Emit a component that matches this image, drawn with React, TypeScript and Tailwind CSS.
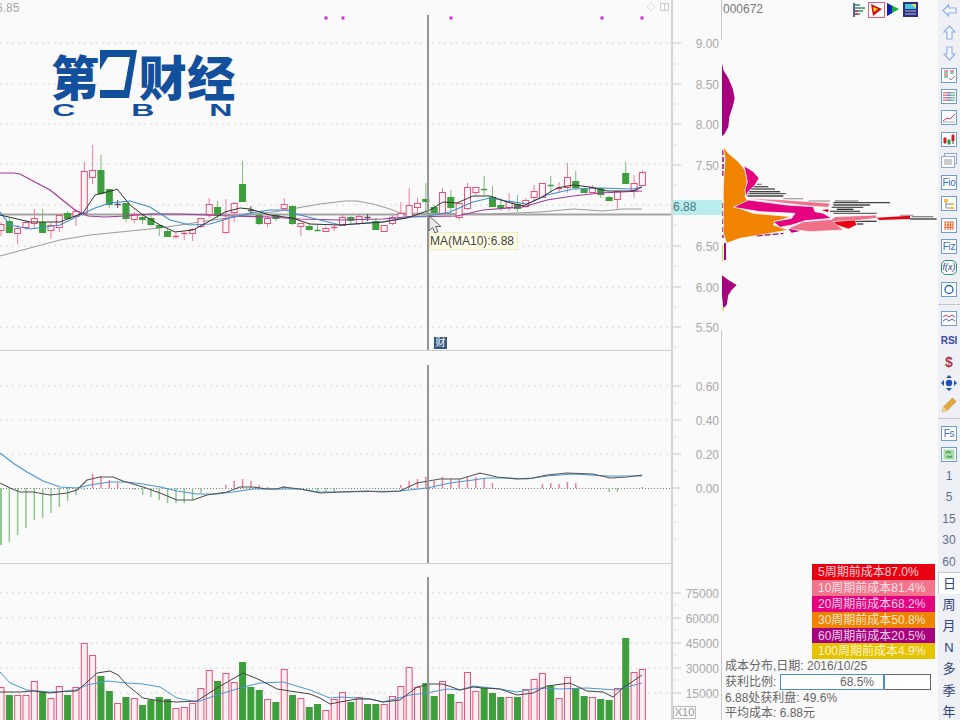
import React from "react";

type Candle = [number, number, number, number, "r" | "g" | "k"];
type Pt = [number, number];

const RED = "#e8517a";
const GREEN = "#3c9f3c";

// x of bar i, same grid in all three panels
const bx = (i: number) => 1 + 8.33 * i;

const candles: Candle[] = [
  [222, 224, 230, 236, "r"], [218, 221, 232, 233, "g"], [225, 228, 233, 244, "r"], [220, 222, 227, 230, "r"],
  [209, 218, 223, 228, "r"], [209, 222, 232, 233, "g"], [223, 225, 230, 239, "r"], [215, 215, 227, 232, "r"],
  [211, 213, 218, 219, "g"], [209, 211, 216, 226, "r"], [162, 171, 213, 213, "r"], [145, 170, 177, 184, "r"],
  [155, 170, 193, 195, "g"], [189, 189, 204, 208, "g"], [200, 204, 205, 208, "k"], [203, 203, 218, 222, "g"],
  [212, 214, 219, 223, "r"], [214, 217, 219, 224, "g"], [213, 218, 224, 226, "g"], [225, 225, 227, 236, "g"],
  [229, 231, 236, 236, "g"], [233, 236, 237, 238, "r"], [232, 233, 234, 240, "r"], [228, 229, 233, 241, "r"],
  [218, 218, 226, 228, "r"], [198, 204, 214, 218, "r"], [201, 207, 214, 218, "g"], [199, 218, 232, 234, "r"],
  [202, 203, 212, 222, "r"], [161, 184, 201, 201, "g"], [206, 210, 211, 214, "k"], [211, 215, 223, 225, "g"],
  [214, 218, 223, 227, "r"], [213, 215, 218, 221, "g"], [198, 204, 208, 211, "r"], [205, 206, 223, 225, "g"],
  [223, 223, 226, 236, "r"], [224, 226, 229, 231, "g"], [224, 230, 231, 231, "g"], [226, 228, 231, 231, "r"],
  [225, 227, 228, 231, "r"], [215, 217, 225, 226, "r"], [216, 217, 220, 224, "g"], [214, 216, 223, 225, "r"],
  [214, 217, 218, 221, "k"], [218, 221, 229, 229, "g"], [225, 225, 231, 231, "r"], [215, 217, 223, 225, "r"],
  [202, 213, 218, 218, "r"], [188, 205, 216, 216, "r"], [198, 203, 207, 216, "r"], [183, 199, 201, 216, "g"],
  [205, 207, 212, 212, "g"], [188, 192, 213, 215, "r"], [190, 197, 207, 213, "g"], [203, 203, 217, 220, "r"],
  [183, 187, 208, 210, "r"], [187, 187, 192, 195, "r"], [176, 189, 190, 195, "g"], [186, 197, 206, 207, "g"],
  [198, 205, 208, 211, "g"], [193, 201, 207, 211, "r"], [195, 204, 208, 212, "g"], [198, 200, 206, 208, "r"],
  [185, 191, 197, 200, "r"], [183, 183, 197, 197, "r"], [176, 185, 186, 193, "g"], [182, 188, 189, 193, "r"],
  [163, 177, 187, 193, "r"], [171, 181, 187, 190, "g"], [188, 189, 192, 192, "g"], [185, 187, 192, 193, "r"],
  [187, 188, 194, 198, "g"], [196, 197, 200, 201, "g"], [191, 191, 199, 210, "r"], [162, 173, 183, 184, "g"],
  [175, 183, 190, 198, "r"], [170, 172, 185, 185, "r"],
];

const maPurple: Pt[] = [[0, 173], [13, 173], [20, 174], [35, 182], [50, 190], [60, 198], [75, 210], [88, 216], [105, 217], [125, 216], [150, 214], [180, 214], [230, 216], [270, 217], [300, 219], [340, 220], [383, 219], [407, 217], [457, 216], [483, 210], [523, 207], [547, 200], [573, 196], [600, 193], [642, 191]];
const maGray: Pt[] = [[0, 256], [30, 248], [60, 240], [90, 235], [120, 232], [160, 228], [200, 222], [240, 216], [280, 211], [320, 204], [345, 201], [357, 201], [373, 204], [390, 209], [400, 213], [490, 214], [517, 213], [540, 212], [573, 209], [603, 211], [623, 209], [642, 209]];
const maBlack: Pt[] = [[0, 215], [30, 222], [60, 222], [75, 216], [83, 213], [95, 195], [115, 190], [117, 189], [130, 205], [143, 215], [160, 225], [175, 232], [193, 230], [208, 222], [225, 212], [240, 208], [250, 209], [270, 215], [292, 218], [310, 224], [340, 225], [383, 222], [407, 218], [430, 210], [443, 202], [457, 203], [473, 196], [490, 196], [507, 202], [523, 206], [540, 198], [557, 188], [573, 185], [590, 187], [607, 191], [633, 191], [642, 187]];
const maBlue: Pt[] = [[0, 212], [10, 225], [30, 229], [60, 225], [80, 215], [95, 208], [110, 203], [130, 201], [150, 207], [170, 220], [190, 225], [210, 224], [230, 218], [250, 213], [270, 210], [285, 210], [300, 215], [320, 220], [340, 225], [383, 222], [407, 217], [428, 216], [450, 212], [473, 202], [490, 198], [507, 201], [527, 204], [547, 195], [573, 189], [600, 188], [633, 189], [642, 187]];

const macdBars: [number, number][] = [
  [0, 545], [1, 542], [2, 535], [3, 528], [4, 520], [5, 518], [6, 513], [7, 507], [8, 501], [9, 495], [10, 490],
  [11, 474], [12, 476], [13, 480], [14, 483], [16, 490], [17, 495], [18, 497], [19, 500], [20, 503], [21, 503], [22, 503], [23, 500], [24, 493],
  [27, 485], [28, 481], [29, 479], [30, 481], [31, 485], [32, 487], [34, 486], [37, 490], [38, 491], [39, 493], [40, 493],
  [48, 485], [49, 481], [50, 479], [51, 477], [52, 481], [53, 477], [54, 479], [55, 479], [56, 477], [57, 477], [58, 478], [59, 483],
  [65, 484], [66, 483], [67, 484], [68, 482], [69, 483], [73, 492], [74, 492], [77, 487],
];
const difLine: Pt[] = [[0, 483], [10, 488], [20, 492], [33, 492], [50, 495], [67, 493], [77, 490], [87, 480], [100, 477], [113, 477], [123, 481], [143, 487], [160, 493], [177, 500], [193, 500], [207, 495], [227, 492], [240, 487], [253, 487], [267, 489], [277, 489], [283, 487], [300, 489], [320, 493], [340, 492], [367, 491], [383, 492], [400, 491], [417, 483], [440, 479], [460, 479], [480, 473], [497, 477], [517, 479], [533, 478], [547, 475], [567, 473], [593, 474], [610, 478], [627, 477], [642, 475]];
const deaLine: Pt[] = [[0, 453], [13, 463], [27, 472], [43, 481], [60, 487], [77, 488], [90, 485], [110, 482], [127, 482], [143, 484], [160, 487], [177, 491], [197, 494], [217, 494], [233, 492], [253, 489], [277, 489], [300, 489], [320, 492], [340, 492], [400, 491], [427, 488], [450, 483], [473, 480], [487, 478], [507, 478], [527, 479], [547, 476], [573, 474], [607, 476], [642, 476]];

const volTops: number[] = [
  687, 695, 695, 695, 681, 692, 698, 686, 695, 687, 643, 655, 676, 691, 703, 697, 698, 705, 700, 697, 699, 708, 707, 703, 688, 670,
  681, 673, 682, 662, 687, 690, 699, 702, 669, 695, 698, 707, 704, 710, 699, 692, 702, 697, 704, 704, 704, 696, 686, 667, 687, 683,
  696, 681, 694, 702, 672, 691, 688, 693, 697, 697, 697, 689, 679, 673, 686, 698, 677, 688, 696, 697, 699, 700, 688, 638, 672, 669,
];
const volGreen = new Set([1, 5, 8, 12, 13, 15, 17, 18, 19, 20, 26, 29, 30, 31, 33, 35, 37, 38, 42, 44, 45, 51, 52, 54, 58, 59, 60, 62, 66, 69, 70, 72, 73, 75]);
const volBlack: Pt[] = [[0, 692], [20, 692], [33, 691], [50, 693], [67, 691], [77, 691], [87, 682], [97, 673], [110, 671], [118, 675], [127, 685], [143, 698], [160, 701], [177, 702], [197, 701], [217, 688], [243, 673], [260, 680], [277, 689], [290, 691], [310, 694], [320, 698], [330, 704], [340, 702], [357, 699], [370, 699], [383, 702], [400, 700], [417, 687], [430, 684], [443, 684], [460, 690], [473, 687], [483, 688], [500, 689], [517, 695], [533, 693], [547, 686], [570, 683], [587, 691], [603, 692], [613, 697], [623, 688], [642, 675]];
const volBlue: Pt[] = [[0, 672], [10, 683], [27, 690], [50, 692], [73, 691], [87, 685], [107, 681], [127, 683], [143, 684], [160, 687], [177, 698], [197, 702], [217, 695], [240, 688], [260, 683], [283, 682], [310, 690], [330, 698], [340, 697], [357, 698], [370, 699], [383, 702], [410, 695], [427, 693], [447, 689], [460, 690], [473, 686], [500, 689], [517, 692], [540, 688], [560, 689], [587, 688], [617, 690], [623, 688], [642, 683]];

// chip distribution shapes, traced on a 3x crop of x=660 and y=0
const chip3 = (pts: Pt[]) => pts.map(([x, y]) => `${660 + x / 3},${y / 3}`).join(" ");
// same, for the tighter crop of x=720 and y=150
const chip10 = (pts: Pt[]) => pts.map(([x, y]) => `${720 + x / 3},${150 + y / 3}`).join(" ");

const chipLines: [number, number, number, string][] = [
  [103, 110, 125, "#8a8a8a"], [110, 100, 145, "#555"], [117, 90, 165, "#555"], [125, 88, 180, "#444"], [131, 85, 197, "#555"], [138, 82, 190, "#444"],
  [146, 190, 250, "#aaa"], [153, 265, 330, "#aaa"], [153, 345, 415, "#888"], [158, 340, 510, "#444"], [165, 340, 450, "#444"], [172, 335, 430, "#555"],
  [178, 350, 400, "#333"], [184, 330, 420, "#555"], [190, 340, 470, "#666"], [196, 540, 580, "#aaa"], [200, 575, 640, "#888"], [207, 570, 650, "#444"],
  [214, 405, 470, "#444"], [222, 410, 430, "#444"],
];

const poly = (pts: Pt[]) => pts.map((p) => p.join(",")).join(" ");

function Plot({ top, height, children }: { top: number; height: number; children: React.ReactNode }) {
  return (
    <svg width={671} height={height} viewBox={`0 ${top} 671 ${height}`} className="block shrink-0">
      {children}
    </svg>
  );
}

// one value column on the right of a panel
function Axis({ top, height, labels, ticks, side = true, children }: { top: number; height: number; labels: [string, number][]; ticks: number[]; side?: boolean; children?: React.ReactNode }) {
  return (
    <div className="w-[51px] shrink-0 border-l-2 border-[#d6d6d6]">
      <svg width={49} height={height} viewBox={`673 ${top} 49 ${height}`} className="block">
        {ticks.map((y) => (
          <line key={y} x1={673} x2={677} y1={y} y2={y} stroke="#dcdcdc" />
        ))}
        {labels.map(([t, y]) => (
          <g key={t}>
            <line x1={673} x2={681} y1={y} y2={y} stroke="#c8c8c8" />
            <text x={719} y={y + 4.5} textAnchor="end" fontSize={12} fill="#a9a9a9">
              {t}
            </text>
          </g>
        ))}
        {side && <line x1={721.5} x2={721.5} y1={top} y2={top + height} stroke="#c8c8c8" />}
        {children}
      </svg>
    </div>
  );
}

function Grid({ ys }: { ys: number[] }) {
  return (
    <>
      {ys.map((y) => (
        <line key={y} x1={0} x2={671} y1={y} y2={y} stroke="#d8d8d8" strokeDasharray="2 4" />
      ))}
    </>
  );
}

function PricePanel() {
  return (
    <div className="flex h-[351px]">
      <div className="h-[351px] w-[671px] border-b border-[#cfcfcf]">
        <Plot top={0} height={350}>
          <Grid ys={[43, 84, 124, 164, 205, 246, 287, 327]} />
          <text x={-4} y={12} fontSize={12} fill="#a9a9a9">6.85</text>
          {[326, 343, 451, 602, 642].map((x) => (
            <rect key={x} x={x - 1.5} y={16.5} width={3} height={3} fill="#e020e0" />
          ))}
          <path d="M651 3l4 4-4 4-4-4z" fill="none" stroke="#ddd" />
          <path d="M660.5 3.5h8v7h-8zM664.5 3.5v7" fill="none" stroke="#ccc" />
          <line x1={0} x2={671} y1={214.5} y2={214.5} stroke="#a4a4a4" strokeWidth={2} />
          <polyline points={poly(maGray)} fill="none" stroke="#9a9a9a" />
          {candles.map(([hi, t, b, lo, kind], i) => {
            const x = bx(i);
            const c = kind === "r" ? RED : kind === "g" ? GREEN : "#555";
            return (
              <g key={i}>
                <line x1={x} x2={x} y1={hi} y2={lo} stroke={kind === "g" ? "#7cbb7c" : kind === "k" ? "#555" : "#ee7f9c"} />
                {b - t < 2 ? (
                  <line x1={x - 3} x2={x + 3} y1={t + 0.5} y2={t + 0.5} stroke={c} strokeWidth={1.5} />
                ) : (
                  <rect x={x - 3} y={t + 0.5} width={6} height={b - t} fill={kind === "r" ? "#fdf4f6" : c} stroke={c} />
                )}
              </g>
            );
          })}
          <polyline points={poly(maPurple)} fill="none" stroke="#a03a9c" strokeWidth={1.2} />
          <polyline points={poly(maBlue)} fill="none" stroke="#3f8fd0" strokeWidth={1.1} />
          <polyline points={poly(maBlack)} fill="none" stroke="#333" />
          <line x1={428} x2={428} y1={15} y2={350} stroke="#959595" strokeWidth={2} />
        </Plot>
      </div>
      <Axis
        top={0}
        height={351}
        labels={[["9.00", 43], ["8.50", 84], ["8.00", 124], ["7.50", 165], ["6.50", 246], ["6.00", 287], ["5.50", 327]]}
        ticks={[64, 104, 145, 185, 225, 266, 307, 347]}
        side={false}
      >
        <rect x={673} y={200} width={49} height={15} fill="#b9ecec" />
        <text x={673} y={211} fontSize={12} fill="#4d7a80">6.88</text>
        <line x1={721.5} x2={721.5} y1={0} y2={40} stroke="#c8c8c8" />
        <line x1={721.5} x2={721.5} y1={330} y2={351} stroke="#c8c8c8" />
      </Axis>
    </div>
  );
}

function MacdPanel() {
  return (
    <div className="flex h-[213px]">
      <div className="h-[213px] w-[671px] border-b border-[#cfcfcf]">
        <Plot top={351} height={212}>
          <Grid ys={[386, 420, 454]} />
          <line x1={0} x2={671} y1={488.5} y2={488.5} stroke="#777" strokeDasharray="1 2" />
          {macdBars.map(([i, y]) => (
            <line key={i} x1={bx(i)} x2={bx(i)} y1={488} y2={y} stroke={y < 488 ? "#ee7f9c" : "#8fc88f"} strokeWidth={i === 0 ? 2 : 1.5} />
          ))}
          <polyline points={poly(deaLine)} fill="none" stroke="#4a96d4" strokeWidth={1.2} />
          <polyline points={poly(difLine)} fill="none" stroke="#555" strokeWidth={1.1} />
          <line x1={428} x2={428} y1={365} y2={563} stroke="#959595" strokeWidth={2} />
        </Plot>
      </div>
      <Axis top={351} height={213} labels={[["0.60", 386], ["0.40", 420], ["0.20", 454], ["0.00", 488]]} ticks={[403, 437, 471, 505, 522, 539]} />
    </div>
  );
}

function VolumePanel() {
  return (
    <div className="relative flex h-[156px]">
      <Plot top={564} height={156}>
        <Grid ys={[593, 618, 643, 668, 693]} />
        {volTops.map((y, i) => {
          const green = volGreen.has(i);
          return (
            <rect
              key={i}
              x={bx(i) - 3}
              y={y + 0.5}
              width={6}
              height={720 - y}
              fill={green ? GREEN : "#fdeef2"}
              stroke={green ? GREEN : RED}
            />
          );
        })}
        <polyline points={poly(volBlue)} fill="none" stroke="#4a96d4" />
        <polyline points={poly(volBlack)} fill="none" stroke="#444" />
        <line x1={428} x2={428} y1={577} y2={720} stroke="#959595" strokeWidth={2} />
      </Plot>
      <Axis top={564} height={156} labels={[["75000", 593], ["60000", 618], ["45000", 643], ["30000", 668], ["15000", 693]]} ticks={[605, 630, 655, 680]} />
      <div className="absolute left-[673px] top-[142px] flex h-[13px] w-[23px] items-center justify-center border border-[#bbb] bg-[#fafafa] text-[11px] text-[#999]">
        X10
      </div>
    </div>
  );
}

function ChipChart() {
  const orange: Pt[] = [[190, 440], [205, 460], [235, 485], [255, 510], [262, 545], [255, 590], [265, 605], [225, 620], [280, 640], [395, 650], [345, 665], [340, 675], [385, 690], [300, 705], [240, 715], [200, 730], [190, 700], [190, 650], [190, 560], [195, 480]];
  return (
    <svg width={216} height={308} viewBox="722 22 216 308" className="block shrink-0">
      <polygon points={chip3([[185, 183], [190, 210], [205, 235], [218, 265], [224, 295], [218, 320], [208, 350], [205, 380], [195, 400], [185, 410]])} fill="#a6007f" />
      <polygon points={chip3([[185, 825], [205, 840], [230, 855], [215, 870], [205, 885], [200, 915], [190, 925], [185, 880]])} fill="#a6007f" />
      <line x1={723} x2={723} y1={150} y2={176} stroke="#a6007f" strokeWidth={1.5} strokeDasharray="5 2" />
      <line x1={723} x2={723} y1={203} y2={238} stroke="#a6007f" strokeWidth={1.5} strokeDasharray="5 3" />
      <line x1={724} x2={724} y1={190} y2={200} stroke="#e6c800" strokeWidth={2} />
      <line x1={722} x2={722} y1={245} y2={262} stroke="#e6c800" strokeWidth={1.5} />
      <line x1={725} x2={725} y1={243} y2={260} stroke="#a6007f" strokeWidth={2} />
      <line x1={723} x2={723} y1={307} y2={311} stroke="#e6c800" />

      {chipLines.map(([y, a, b, c]) => (
        <line key={`${y}-${a}`} x1={720 + a / 3} x2={720 + b / 3} y1={150 + y / 3} y2={150 + y / 3} stroke={c} strokeWidth={1.4} />
      ))}

      <polygon points={chip3(orange)} fill="#f08300" stroke="#fff" strokeWidth={0.7} />
      <polygon points={chip3([[252, 497], [280, 515], [297, 535], [285, 555], [265, 575], [258, 590], [255, 570], [262, 545], [255, 510]])} fill="#e4007f" stroke="#fff" strokeWidth={0.7} />
      <polygon points={chip10([[80, 145], [190, 150], [330, 160], [325, 172], [270, 168], [200, 160]])} fill="#f0708a" stroke="#fff" strokeWidth={0.5} />
      <polygon points={chip10([[205, 235], [250, 215], [335, 208], [345, 200], [470, 195], [470, 205], [405, 212], [340, 215], [370, 240], [270, 245], [215, 238]])} fill="#f0708a" stroke="#fff" strokeWidth={0.7} />
      <polygon points={chip10([[40, 172], [85, 150], [200, 165], [280, 170], [285, 185], [310, 190], [335, 205], [255, 212], [215, 225], [180, 232], [160, 215], [215, 205], [225, 190], [120, 185]])} fill="#e4007f" stroke="#fff" strokeWidth={0.7} />
      <polygon points={chip10([[340, 215], [405, 210], [410, 225], [385, 237], [350, 225]])} fill="#e60012" stroke="#fff" strokeWidth={0.5} />
      <polygon points={chip10([[470, 203], [570, 197], [570, 207], [478, 210]])} fill="#e60012" />
      <polygon points={chip10([[305, 180], [325, 178], [325, 187]])} fill="#c0002a" />
      <polygon points={chip10([[205, 236], [240, 243], [215, 248]])} fill="#c4007f" />
      <polyline points={chip10([[110, 258], [190, 250]])} fill="none" stroke="#a6007f" strokeWidth={1.2} strokeDasharray="6 2" />
    </svg>
  );
}

const legend = [
  ["5周期前成本87.0%", "bg-[#e60012]"],
  ["10周期前成本81.4%", "bg-[#f4748c]"],
  ["20周期前成本68.2%", "bg-[#e4007f]"],
  ["30周期前成本50.8%", "bg-[#f08300]"],
  ["60周期前成本20.5%", "bg-[#a6007f]"],
  ["100周期前成本4.9%", "bg-[#e6c300]"],
];

function ChipPanel() {
  return (
    <div className="flex w-[216px] shrink-0 flex-col">
      <div className="flex h-[22px] shrink-0 items-start justify-between pl-px pr-[20px] pt-[2px]">
        <span className="text-[12px] leading-[14px] text-[#777]">000672</span>
        <div className="flex items-center">
          <svg width={13} height={16} viewBox="0 0 13 16">
            <path d="M1 1v14" stroke="#223388" strokeWidth={1.5} />
            <path d="M2 3h5M2 6h10M2 9h8M2 12h5" stroke="#6aa98a" strokeWidth={1.8} />
            <path d="M2 9h3M2 12h3" stroke="#d0304a" strokeWidth={1.5} />
          </svg>
          <svg width={17} height={16} viewBox="0 0 17 16" className="ml-[2px]">
            <rect x={0.5} y={0.5} width={16} height={15} fill="#fff" stroke="#ef5a7a" />
            <path d="M3 2l11 5-9 7z" fill="#c81020" />
            <path d="M5 5l5 2-4 3z" fill="#f6e000" />
          </svg>
          <svg width={12} height={16} viewBox="0 0 12 16" className="ml-[2px]">
            <path d="M0 1l12 6-12 7z" fill="#10b040" />
            <path d="M0 1l5 3v7l-5 3z" fill="#1020b0" />
          </svg>
          <svg width={15} height={16} viewBox="0 0 15 16" className="ml-[4px]">
            <rect width={15} height={15} fill="#2a2f80" />
            <rect x={2} y={2} width={11} height={5} fill="#40c8d8" />
            <path d="M8 2h5v4z" fill="#f2e060" />
            <path d="M2 9h11M2 12h11" stroke="#b8bce0" />
          </svg>
        </div>
      </div>
      <ChipChart />
      <div className="h-[234px] shrink-0" />
      <div className="mr-[3px] w-[123px] self-end">
        {legend.map(([t, bg]) => (
          <div key={t} className={`h-[15.9px] whitespace-nowrap pl-[6px] text-[12px] leading-[16px] text-white/80 ${bg}`}>
            {t}
          </div>
        ))}
      </div>
      <div className="flex flex-col pl-[3px] text-[12px] leading-[16px] text-[#666]">
        <div className="mt-[-1px] h-[16px] whitespace-nowrap">成本分布,日期: 2016/10/25</div>
        <div className="flex h-[16px] items-center whitespace-nowrap">
          <span className="w-[55px]">获利比例:</span>
          <div className="flex h-[16px] w-[151px] border border-[#666] bg-white">
            <div className="flex w-[103px] items-center justify-end border-r border-[#4a90d0] pr-[9px] outline outline-[#4a90d0]">68.5%</div>
          </div>
        </div>
        <div className="h-[15px] whitespace-nowrap">6.88处获利盘: 49.6%</div>
        <div className="h-[16px] whitespace-nowrap">平均成本: 6.88元</div>
      </div>
    </div>
  );
}

function BoxText({ t, color = "#3a6cc0" }: { t: string; color?: string }) {
  return (
    <span className="flex h-[15px] w-[16px] items-center justify-center border border-[#6f9be0] bg-white text-[10px] tracking-[-0.3px]" style={{ color }}>
      {t}
    </span>
  );
}

function BoxIcon({ children }: { children: React.ReactNode }) {
  return (
    <svg width={16} height={15} viewBox="0 0 16 15">
      <rect x={0.5} y={0.5} width={15} height={14} fill="#fff" stroke="#6f9be0" />
      {children}
    </svg>
  );
}

const arrowProps = { fill: "#f6f8ff", stroke: "#8fb0e8", strokeWidth: 1.2 };

const topTools: React.ReactNode[] = [
  <svg key="back" width={15} height={13} viewBox="0 0 15 13"><path d="M6.5 1L1 6.5 6.5 12V9H14V4H6.5z" {...arrowProps} /></svg>,
  <svg key="up" width={13} height={15} viewBox="0 0 13 15"><path d="M1 7L6.5 1 12 7H9v7H4V7z" {...arrowProps} /></svg>,
  <svg key="down" width={13} height={15} viewBox="0 0 13 15"><path d="M4 1h5v7h3l-5.5 6L1 8h3z" {...arrowProps} /></svg>,
  <BoxIcon key="table"><path d="M3 3h4M9 3h4M3 7h4" stroke="#d03050" strokeWidth={1.2} /><path d="M3 5h4M9 5h4M3 9h4" stroke="#20a050" strokeWidth={1.2} /><path d="M8 10l2 2 4-4" stroke="#888" fill="none" /></BoxIcon>,
  <BoxIcon key="colors"><path d="M3 3v9M5 3v9" stroke="#d03050" strokeWidth={1.2} strokeDasharray="1.5 1" /><path d="M7 3v9M9 3v9" stroke="#2030b0" strokeWidth={1.2} strokeDasharray="1.5 1" /><path d="M11 3v9M13 3v9" stroke="#20a050" strokeWidth={1.2} strokeDasharray="1.5 1" /></BoxIcon>,
  <BoxIcon key="line"><path d="M2 11l4-3 3 1 5-5" fill="none" stroke="#e03060" /><path d="M2 12h12" stroke="#9ab" /></BoxIcon>,
  <BoxIcon key="bars"><path d="M4 5v7M8 7v6M12 2v10" stroke="#444" /><rect x={2.5} y={6} width={3} height={5} fill="#d02020" /><rect x={6.5} y={8} width={3} height={4} fill="#20a040" /><rect x={10.5} y={3} width={3} height={6} fill="#d02020" /></BoxIcon>,
  <svg key="win" width={16} height={15} viewBox="0 0 16 15"><rect x={3.5} y={0.5} width={12} height={10} fill="#f4f6fa" stroke="#8fa8d8" /><rect x={0.5} y={3.5} width={13} height={11} fill="#fff" stroke="#8fa8d8" /><path d="M3 7h8M3 9h8M3 11h8" stroke="#999" /></svg>,
  <BoxText key="fio" t="Fio" />,
  <BoxIcon key="tree"><path d="M3 3h4v3H3z" fill="#eec040" /><path d="M9 7h4v2H9zM9 11h4v2H9z" fill="#eec040" /><path d="M5 6v6h4M5 8h4" fill="none" stroke="#888" /></BoxIcon>,
  <BoxIcon key="bldg"><path d="M4 12V4h8v8M4 7h8M4 9.5h8M7 4v8M9.5 4v8" fill="none" stroke="#e86a30" strokeWidth={1.1} /></BoxIcon>,
  <BoxText key="fiz" t="Fiz" />,
  <span key="fx" className="flex h-[15px] w-[16px] items-center justify-center rounded-[5px] border border-[#2f8f70] bg-white text-[9px] italic text-[#224488]">f(x)</span>,
  <BoxIcon key="o"><circle cx={8} cy={7.5} r={4} fill="none" stroke="#2a62b8" strokeWidth={1.3} /></BoxIcon>,
];

const midTools: React.ReactNode[] = [
  <BoxIcon key="wave"><path d="M2 6l3-2 3 2 3-2 3 2" fill="none" stroke="#d03060" /><path d="M2 10l3-2 3 2 3-2 3 2" fill="none" stroke="#5060c0" /></BoxIcon>,
  <span key="rsi" className="text-[10px] font-bold text-[#3a48b0]">RSI</span>,
  <span key="dollar" className="text-[14px] font-bold leading-none text-[#b03048]">$</span>,
  <svg key="move" width={16} height={16} viewBox="0 0 16 16" fill="#1c50c0"><path d="M8 0l3 3H5zM8 16l-3-3h6zM0 8l3-3v6zM16 8l-3 3V5z" /><circle cx={8} cy={8} r={3.2} /></svg>,
  <svg key="pencil" width={16} height={16} viewBox="0 0 16 16"><path d="M1 15l1.5-5L11.5 1l3.5 3.5L6 13.5z" fill="#e8a838" stroke="#b08030" strokeWidth={0.6} /><path d="M1 15l1.5-5L6 13.5z" fill="#f0d8a0" /></svg>,
];

const bottomTools = ["1", "5", "15", "30", "60"];
const periodTools = ["周", "月", "N", "多", "季", "年"];

function Toolbar() {
  const row = "flex h-[21.45px] shrink-0 items-center justify-center";
  return (
    <div className="flex w-[22px] shrink-0 flex-col bg-[#eef0f5]">
      {topTools.map((n, i) => (
        <div key={i} className={row}>{n}</div>
      ))}
      <div className="mb-[3px] mt-[4px] h-px shrink-0 bg-[#c4c4c4]" />
      {midTools.map((n, i) => (
        <div key={i} className={row}>{n}</div>
      ))}
      <div className="mb-[3px] mt-[3px] h-px shrink-0 bg-[#c4c4c4]" />
      <div className={row}><BoxText t="Fs" /></div>
      <div className={row}>
        <BoxIcon><rect x={2.5} y={2.5} width={11} height={10} fill="#a8dca8" /><path d="M5 6c2-2 4-1 5 0M11 9c-2 2-4 1-5 0" fill="none" stroke="#3a9a5a" strokeWidth={1.4} /></BoxIcon>
      </div>
      {bottomTools.map((t) => (
        <div key={t} className={`${row} text-[12px] text-[#5f6f8f]`}>{t}</div>
      ))}
      <div className={`${row} border-l border-t border-[#c8ccd4] bg-white text-[13px] text-[#33447a]`}>日</div>
      {periodTools.map((t) => (
        <div key={t} className={`${row} text-[13px] text-[#33447a]`}>{t}</div>
      ))}
    </div>
  );
}

function Logo() {
  return (
    <div className="absolute left-[51px] top-[50px] w-[184px] text-[#12509d]">
      <div className="flex h-[50px] items-end [font-family:'Noto_Sans_CJK_SC',sans-serif] text-[48px] font-black leading-[50px] tracking-[-1px]">
        <span className="w-[49px]">第</span>
        <svg width={38} height={48} viewBox="0 0 38 48" className="mb-[2px] shrink-0">
          <path d="M0 0h37l-8 48H0z" fill="#12509d" />
          <path d="M0 20l8-13h22l-6 33H0z" fill="#fafafa" />
        </svg>
        <span className="ml-px w-[49px]">财</span>
        <span className="w-[48px]">经</span>
      </div>
      <div className="mt-[3px] flex h-[15px] items-center justify-between pl-[7px] pr-[8px] text-[16px] font-bold leading-[15px]">
        <span className="inline-block scale-x-200">C</span>
        <span className="inline-block scale-x-200">B</span>
        <span className="inline-block scale-x-200">N</span>
      </div>
    </div>
  );
}

export default function App() {
  return (
    <div className="relative flex h-[720px] w-[960px] overflow-hidden bg-[#fafafa] [font-family:'Liberation_Sans','Noto_Sans_CJK_SC',sans-serif]">
      <div className="flex w-[722px] shrink-0 flex-col">
        <PricePanel />
        <MacdPanel />
        <VolumePanel />
      </div>
      <ChipPanel />
      <Toolbar />

      <Logo />

      {/* crosshair readout */}
      <div className="absolute left-[429px] top-[232px] flex h-[18px] w-[89px] items-center border border-[#ecebc4] bg-[#ffffe8] text-[12px] text-[#444]">
        MA(MA10):6.88
      </div>
      <svg width={14} height={20} viewBox="0 0 14 20" className="absolute left-[428px] top-[215px]">
        <path d="M1 1v15l3.5-3.5L7 18l3-1.5-2.5-5H13z" fill="#e8e8e8" stroke="#666" />
      </svg>
      <div className="absolute left-[434px] top-[337px] flex h-[12px] w-[13px] items-center justify-center bg-[#35587f] text-[10px] leading-none text-white">
        财
      </div>
    </div>
  );
}
